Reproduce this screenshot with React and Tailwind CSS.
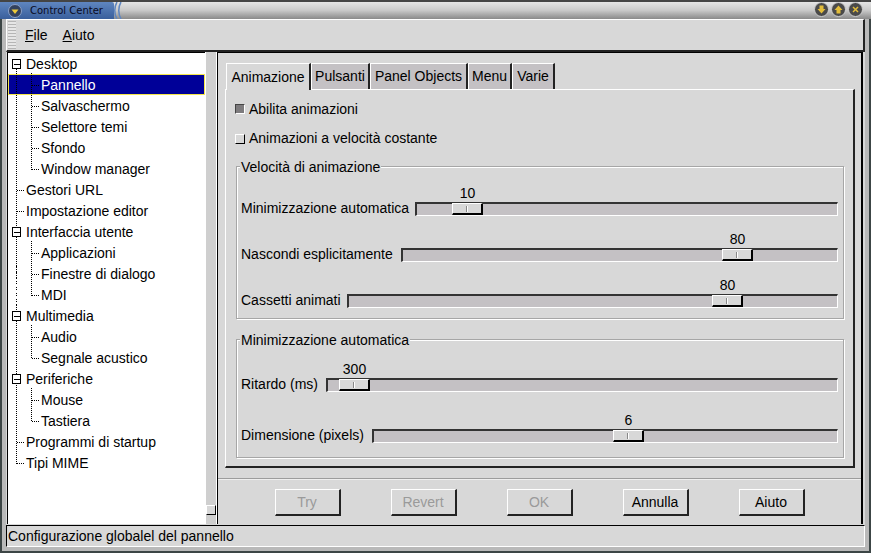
import React from "react";

const rows = [
  ["Desktop", 0, "open"], ["Pannello", 1], ["Salvaschermo", 1], ["Selettore temi", 1], ["Sfondo", 1], ["Window manager", 1, "last"],
  ["Gestori URL", 0], ["Impostazione editor", 0], ["Interfaccia utente", 0, "open"], ["Applicazioni", 1], ["Finestre di dialogo", 1], ["MDI", 1, "last"],
  ["Multimedia", 0, "open"], ["Audio", 1], ["Segnale acustico", 1, "last"], ["Periferiche", 0, "open"], ["Mouse", 1], ["Tastiera", 1, "last"],
  ["Programmi di startup", 0], ["Tipi MIME", 0],
];

function TreeLines() {
  const cy = (i) => 11.5 + i * 21;
  const d = [];
  d.push(`M8.5 ${cy(0)}V${cy(19)}`);
  rows.forEach(([, lvl, kind], i) => {
    if (lvl === 0 && kind !== "open") d.push(`M9 ${cy(i)}H17`);
    if (lvl === 1) d.push(`M24 ${cy(i)}H31`);
    if (kind === "open") {
      let last = i + 1;
      while (rows[last + 1] && rows[last + 1][1] === 1) last++;
      d.push(`M23.5 ${cy(i) + 8}V${cy(last)}`);
    }
  });
  return (
    <svg className="absolute left-0 top-0 pointer-events-none" width="60" height="440" shapeRendering="crispEdges">
      <path d={d.join("")} fill="none" stroke="#000" strokeDasharray="1 1" />
      {rows.map(([, , kind], i) =>
        kind === "open" ? (
          <g key={i}>
            <rect x="4.5" y={cy(i) - 5} width="8" height="9" fill="#fff" stroke="#000" />
            <path d={`M6 ${cy(i)}H12`} stroke="#000" />
          </g>
        ) : null
      )}
    </svg>
  );
}

function Tree() {
  return (
    <div className="relative w-[198px] h-full bg-white border-l border-t border-black border-r-0 overflow-hidden shrink-0">
      {rows.map(([label, lvl]) => (
        <div
          key={label}
          className={
            "h-[21px] flex items-center leading-none " +
            (lvl === 1 ? "pl-[33px] " : "pl-[18px] ") +
            (label === "Pannello" ? "bg-[#000098] text-white outline outline-1 -outline-offset-1 outline-[#f4e64a]" : "text-black")
          }
        >
          {label}
        </div>
      ))}
      <TreeLines />
    </div>
  );
}

function Check({ checked }) {
  return (
    <span
      className={
        "block -ml-[1px] w-[10px] h-[10px] border " +
        (checked ? "bg-[#7d7b7d] border-t-[#444] border-l-[#444] border-r-white border-b-white" : "bg-[#d8d8d8] border-t-white border-l-white border-r-black border-b-black")
      }
    />
  );
}

function Slider({ label, labelW, thumb, value }) {
  return (
    <div className="flex h-[16px] items-center">
      <div className="shrink-0 whitespace-nowrap pb-[2px]" style={{ width: labelW }}>{label}</div>
      <div className="relative flex-1 h-[14px] bg-[#c4c1c4] border-t-2 border-t-[#333] border-l-2 border-l-[#333] border-r border-r-white border-b border-b-white">
        <div
          className="absolute top-[-1px] h-[12px] w-[31px] bg-[#d8d8d8] border-t border-l border-t-white border-l-white border-r-2 border-b-2 border-r-black border-b-black flex items-center justify-center"
          style={{ left: thumb }}
        >
          <span className="block w-[2px] h-[6px] bg-white border-l border-[#888]" />
        </div>
        <div className="absolute top-[-20px] w-[31px] text-center leading-[18px]" style={{ left: thumb }}>{value}</div>
      </div>
    </div>
  );
}

function Group({ title, className, children }) {
  return (
    <div className={"relative border border-[#a6a6a6] shadow-[inset_1px_1px_0_#fff,1px_1px_0_#fff] pl-[4px] pr-[5px] flex flex-col " + className}>
      <div className="absolute left-[3px] top-[-8px] bg-[#d8d8d8] px-[1px] leading-[16px] whitespace-nowrap">{title}</div>
      {children}
    </div>
  );
}

function Btn({ children, off }) {
  return (
    <div className={"w-[66px] h-[27px] pt-[1px] flex items-center justify-center border-t border-l border-t-white border-l-white border-r-2 border-b-2 border-r-[#222] border-b-[#222] " + (off ? "text-[#9a9a9a]" : "text-black")}>
      {children}
    </div>
  );
}

function Tab({ w, active, children }) {
  return (
    <div
      style={{ width: w }}
      className={
        "flex items-center justify-center border-t border-l border-t-white border-l-white border-r-2 border-r-[#222] whitespace-nowrap " +
        (active ? "h-[27px] bg-[#d8d8d8] relative top-[1px] -mt-[1px]" : "h-[26px] bg-[#c4c1c4]")
      }
    >
      {children}
    </div>
  );
}

function WinBtn({ kind }) {
  return (
    <svg width="17" height="17" viewBox="0 0 17 17">
      <circle cx="8.5" cy="8.5" r="7" fill="#4a4a4a" stroke="#cfcfcf" />
      {kind === "down" && <path d="M6.500 4.500h4v3.500H12.500L8.500 12.500 4.500 8h2z" fill="#e3bd3a" />}
      {kind === "up" && <path d="M6.500 12.500h4V9H12.500L8.500 4.500 4.500 9h2z" fill="#e3bd3a" />}
      {kind === "x" && <path d="M5.500 6.500l1-1 2 2 2-2 1 1-2 2 2 2-1 1-2-2-2 2-1-1 2-2z" fill="#e3bd3a" />}
    </svg>
  );
}

export default function App() {
  return (
    <div className="w-[871px] h-[553px] bg-[#3c4545] flex flex-col overflow-hidden text-[14px] text-black font-['Liberation_Sans',Arial,sans-serif]">
      {/* title bar */}
      <div className="h-[19px] shrink-0 border-t-2 border-[#444] bg-gradient-to-b from-[#e4e4e4] via-[#c8c8c8] to-[#8a8a8a] flex items-center relative">
        <div className="w-[114px] h-full bg-gradient-to-b from-[#5f86c0] to-[#3a5f9c] flex items-center pl-[8px] rounded-tr-[2px] shrink-0">
          <svg width="14" height="14" viewBox="0 0 14 14" className="shrink-0">
            <circle cx="7" cy="7" r="6.500" fill="#33415e" stroke="#8aa0c8" />
            <path d="M3.500 5.500h7L7 10z" fill="#ecc93a" />
          </svg>
          <span className="ml-[8px] text-[10px] leading-none font-['DejaVu_Sans',sans-serif] text-[#0a0a1e] whitespace-nowrap">Control Center</span>
        </div>
        <svg width="12" height="17" viewBox="0 0 12 17" className="shrink-0 -ml-[1px]">
          <path d="M4 0C1 5 1 12 4 17M8 0C5 5 5 12 8 17" fill="none" stroke="#5f86c0" strokeWidth="1.500" />
        </svg>
        <div className="ml-auto flex pr-[7px] pb-[2px]">
          <WinBtn kind="down" />
          <WinBtn kind="up" />
          <WinBtn kind="x" />
        </div>
      </div>

      {/* window frame */}
      <div className="flex-1 min-h-0 mx-[2px] mb-[2px] px-[4px] pb-[4px] bg-[#b9b9b9] flex flex-col">
        <div className="flex-1 min-h-0 flex flex-col bg-[#d8d8d8]">
          {/* menu bar */}
          <div className="h-[33px] shrink-0 flex items-center border-t border-l border-t-white border-l-white border-r-2 border-b-2 border-r-[#222] border-b-[#222]">
            <div className="w-[8px] h-[28px] ml-[1px] shrink-0 bg-[repeating-linear-gradient(0deg,#b5b5b5_0_1px,#e6e6e6_1px_3px)]" />
            <span className="ml-[9px]"><u>F</u>ile</span>
            <span className="ml-[15px]"><u>A</u>iuto</span>
          </div>

          {/* middle */}
          <div className="flex-1 min-h-0 flex pl-[1px]">
            <Tree />
            {/* scroll + splitter */}
            <div className="w-[12px] shrink-0 h-full relative border-l border-r border-white bg-[#cfcfcf]">
              <div className="absolute bottom-[9px] left-0 w-[10px] h-[10px] bg-[#d8d8d8] border-t border-l border-t-white border-l-white border-r border-b border-r-black border-b-black" />
            </div>
            {/* right panel */}
            <div className="flex-1 min-w-0 h-full border-l border-t border-black border-r-2 border-r-black flex flex-col pt-[9px] pl-[7px] pr-[6px] mr-[2px]">
              <div className="flex shrink-0 h-[27px] items-end pl-[1px]">
                <Tab w={85} active>Animazione</Tab>
                <Tab w={59}>Pulsanti</Tab>
                <Tab w={98}>Panel Objects</Tab>
                <Tab w={44}>Menu</Tab>
                <Tab w={43}>Varie</Tab>
              </div>
              <div className="h-[379px] shrink-0 border-t border-l border-t-white border-l-white border-r-2 border-b-2 border-r-[#222] border-b-[#222] pl-[10px] pr-[9px] flex flex-col">
                <div className="h-[30px] mt-[4px] flex items-center gap-[4px] shrink-0"><Check checked />Abilita animazioni</div>
                <div className="h-[29px] flex items-center gap-[4px] shrink-0"><Check />Animazioni a velocità costante</div>
                <Group title="Velocità di animazione" className="mt-[13px] h-[153px] pt-[34px] gap-[30px]">
                  <Slider label="Minimizzazione automatica" labelW={174} thumb={35} value="10" />
                  <Slider label="Nascondi esplicitamente" labelW={160} thumb={319} value="80" />
                  <Slider label="Cassetti animati" labelW={106} thumb={363} value="80" />
                </Group>
                <Group title="Minimizzazione automatica" className="mt-[20px] h-[119px] pt-[37px] gap-[35px]">
                  <Slider label="Ritardo (ms)" labelW={85} thumb={11} value="300" />
                  <Slider label="Dimensione (pixels)" labelW={131} thumb={239} value="6" />
                </Group>
              </div>
              <div className="mt-[10px] border-t border-t-[#9c9c9c] shadow-[inset_0_1px_0_#eee] -ml-[7px] -mr-[6px] flex justify-center gap-[50px] pt-[10px]">
                <Btn off>Try</Btn>
                <Btn off>Revert</Btn>
                <Btn off>OK</Btn>
                <Btn>Annulla</Btn>
                <Btn>Aiuto</Btn>
              </div>
            </div>
          </div>

          {/* status bar */}
          <div className="h-[22px] shrink-0 mt-[1px] border-t border-l border-l-black border-t-black border-r border-b border-r-white border-b-white flex items-center pl-[1px] whitespace-nowrap">
            Configurazione globalel del pannello
          </div>
        </div>
      </div>
    </div>
  );
}
